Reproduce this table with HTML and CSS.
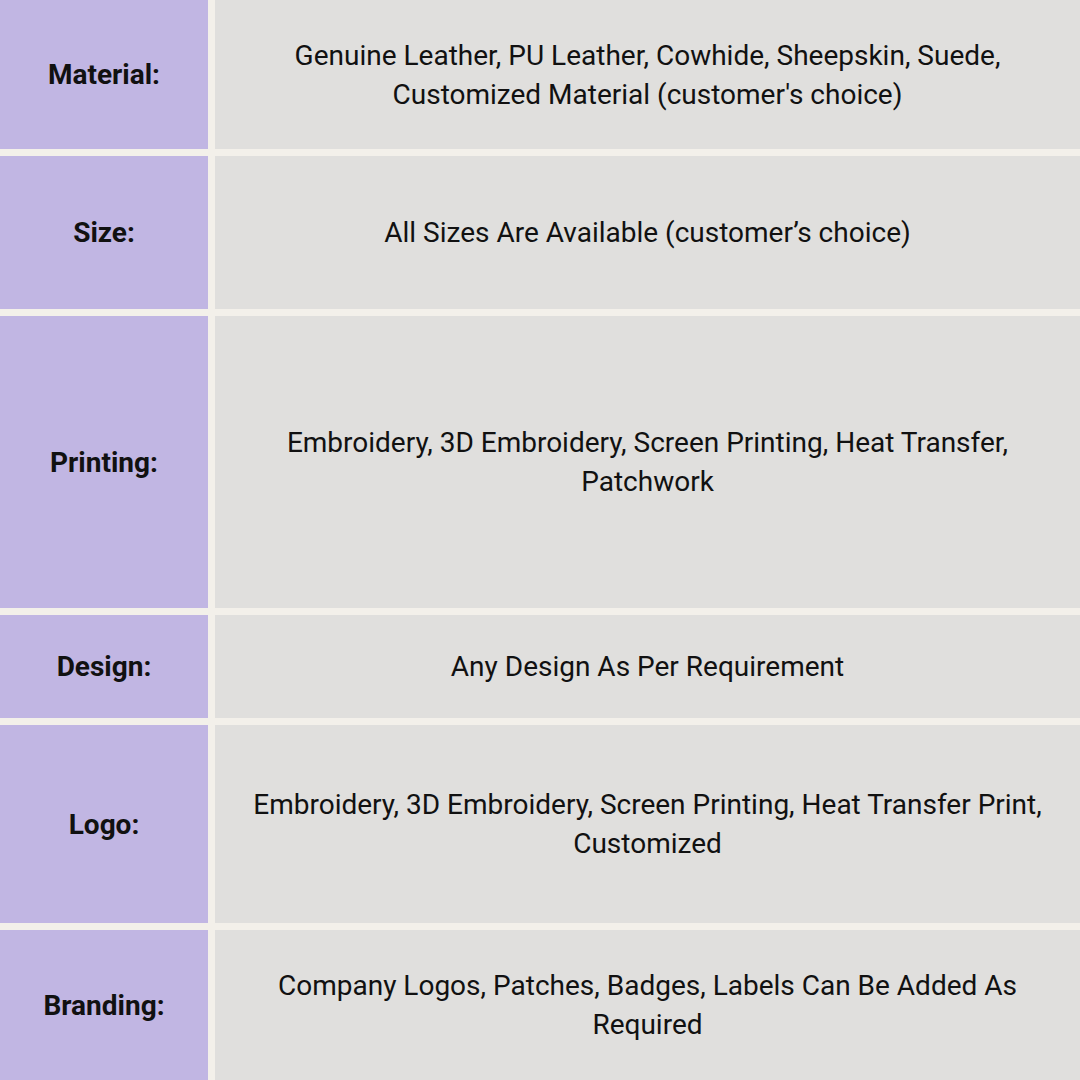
FILE: index.html
```html
<!DOCTYPE html>
<html>
<head>
<meta charset="utf-8">
<link rel="stylesheet" href="styles.css">
</head>
<body>
<div class="table">
  <div class="label r1">Material:</div>
  <div class="value r1">Genuine Leather, PU Leather, Cowhide, Sheepskin, Suede,<br>Customized Material (customer's choice)</div>
  <div class="label r2">Size:</div>
  <div class="value r2">All Sizes Are Available (customer’s choice)</div>
  <div class="label r3">Printing:</div>
  <div class="value r3">Embroidery, 3D Embroidery, Screen Printing, Heat Transfer,<br>Patchwork</div>
  <div class="label r4">Design:</div>
  <div class="value r4">Any Design As Per Requirement</div>
  <div class="label r5">Logo:</div>
  <div class="value r5">Embroidery, 3D Embroidery, Screen Printing, Heat Transfer Print,<br>Customized</div>
  <div class="label r6">Branding:</div>
  <div class="value r6">Company Logos, Patches, Badges, Labels Can Be Added As<br>Required</div>
</div>
</body>
</html>
```
FILE: styles.css
```css
html, body {
  margin: 0;
  padding: 0;
  background: #f3f0ea;
}
.table {
  width: 1080px;
  height: 1080px;
  display: grid;
  grid-template-columns: 208px 1fr;
  grid-template-rows: 149px 153px 292px 103px 198px 150px;
  column-gap: 7px;
  row-gap: 7px;
  font-family: Roboto, "Liberation Sans", sans-serif;
  color: #111;
}
.label {
  background: #c1b6e3;
  display: flex;
  align-items: center;
  justify-content: center;
  font-weight: 700;
  font-size: 28px;
}
.value {
  background: #e0dfdd;
  display: flex;
  align-items: center;
  justify-content: center;
  text-align: center;
  font-size: 28px;
  line-height: 39px;
}
```
